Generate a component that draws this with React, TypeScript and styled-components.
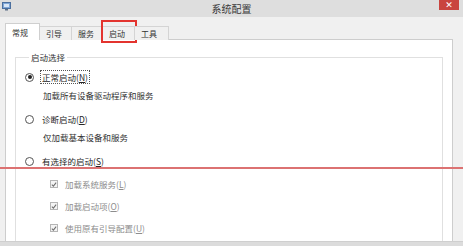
import React from "react";
import styled, { createGlobalStyle, css } from "styled-components";

const Global = createGlobalStyle`
  html, body { margin: 0; padding: 0; background: #f0f0f0; }
  body { font-family: "Noto Sans CJK SC", "Noto Sans", sans-serif; }
  * { box-sizing: border-box; }
`;

const Window = styled.div`
  position: relative;
  width: 463px;
  height: 246px;
  display: flex;
  flex-direction: column;
  overflow: hidden;
  background: #f0f0f0;
  color: #2a2a2a;
`;

const TitleBar = styled.div`
  height: 17px;
  flex: none;
  display: grid;
  grid-template-columns: 1fr auto 1fr;
  align-items: start;
  background: #dedede;
`;

const AppIcon = styled.div`
  padding: 2px 0 0 2px;
  display: flex;
  svg { display: block; }
`;

const Title = styled.div`
  font-size: 10px;
  line-height: 17px;
  color: #3a3a3a;
`;

const CloseArea = styled.div`
  display: flex;
  justify-content: flex-end;
  padding-right: 4px;
`;

const CloseButton = styled.div`
  width: 20px;
  height: 10px;
  background: #c9443f;
  color: #fff;
  font-size: 9px;
  line-height: 10px;
  text-align: center;
  font-family: "DejaVu Sans", sans-serif;
`;

const Body = styled.div`
  flex: 1;
  display: flex;
  flex-direction: column;
  padding: 6px 10px 0 5px;
  min-height: 0;
`;

const TabStrip = styled.div`
  display: flex;
  align-items: flex-end;
  height: 17px;
  flex: none;
  position: relative;
  z-index: 1;
  margin-bottom: -1px;
`;

const Tab = styled.div<{ $active?: boolean; $highlight?: boolean; $w: number }>`
  position: relative;
  width: ${(p) => p.$w}px;
  height: 14px;
  border: 1px solid #d4d4d4;
  border-bottom: none;
  margin-left: -1px;
  background: #f0f0f0;
  font-size: 8px;
  line-height: 13px;
  padding-left: 6px;
  color: #333;
  ${(p) =>
    p.$active &&
    css`
      height: 17px;
      margin-left: 0;
      background: #fff;
      border-color: #cfcfcf;
      line-height: 18px;
      z-index: 2;
    `}
  ${(p) =>
    p.$highlight &&
    css`
      &::after {
        content: "";
        position: absolute;
        left: -2px;
        right: -3px;
        top: -7px;
        bottom: -3px;
        border: 2px solid #e3342f;
      }
    `}
`;

const Panel = styled.div`
  flex: 1;
  min-height: 0;
  overflow: hidden;
  background: #fff;
  border: 1px solid #cdcdcd;
  border-bottom: none;
  padding: 11px 9px 0 9px;
`;

const GroupBox = styled.fieldset`
  margin: 0;
  height: 220px;
  border: 1px solid #e0e0e0;
  padding: 7px 0 0 9px;
  display: flex;
  flex-direction: column;
`;

const Legend = styled.legend`
  font-size: 8.5px;
  line-height: 12px;
  padding: 0 2px;
  margin-left: 4px;
  color: #333;
`;

const OptionRow = styled.div<{ $gap?: number; $space?: number }>`
  display: flex;
  align-items: center;
  height: 14px;
  gap: ${(p) => p.$space ?? 6}px;
  margin-top: ${(p) => p.$gap ?? 0}px;
`;

const RadioCircle = styled.span<{ $checked?: boolean }>`
  width: 9px;
  height: 9px;
  border-radius: 50%;
  border: 1px solid #555;
  background: #fff;
  display: flex;
  align-items: center;
  justify-content: center;
  flex: none;
  &::after {
    content: "";
    width: 4px;
    height: 4px;
    border-radius: 50%;
    background: ${(p) => (p.$checked ? "#222" : "transparent")};
  }
`;

const Label = styled.span<{ $focus?: boolean; $disabled?: boolean }>`
  font-size: 8.5px;
  line-height: 12px;
  color: ${(p) => (p.$disabled ? "#8d8d8d" : "#262626")};
  white-space: nowrap;
  padding: 0 1px;
  border: 1px dotted ${(p) => (p.$focus ? "#555" : "transparent")};
  u { text-decoration: underline; }
`;

const Description = styled.div<{ $gap: number }>`
  font-size: 8.5px;
  line-height: 12px;
  color: #333;
  margin-top: ${(p) => p.$gap}px;
  padding-left: 18px;
  white-space: nowrap;
`;

const CheckList = styled.div`
  display: flex;
  flex-direction: column;
  padding-left: 25px;
`;

const CheckBox = styled.span`
  width: 8px;
  height: 8px;
  border: 1px solid #b5b5b5;
  background: #f4f4f4;
  flex: none;
  display: flex;
  align-items: center;
  justify-content: center;
  svg { display: block; }
`;

const Footer = styled.div`
  height: 5px;
  flex: none;
  background: #dcdcdc;
  border-top: 1px solid #cfcfcf;
`;

const RedLine = styled.div`
  position: absolute;
  left: 0;
  right: 0;
  top: 167px;
  height: 2px;
  background: #dc7272;
  pointer-events: none;
`;

const Check = () => (
  <svg width="7" height="7" viewBox="0 0 7 7">
    <path d="M1 3.6 L2.8 5.4 L6 1.3" fill="none" stroke="#6d6d6d" strokeWidth="1.2" />
  </svg>
);

const tabs = [
  { label: "常规", w: 35, active: true },
  { label: "引导", w: 33 },
  { label: "服务", w: 32 },
  { label: "启动", w: 33, highlight: true },
  { label: "工具", w: 35 },
];

const checks = [
  { label: "加载系统服务", key: "L", gap: 9 },
  { label: "加载启动项", key: "O", gap: 8 },
  { label: "使用原有引导配置", key: "U", gap: 8 },
];

export default function App() {
  return (
    <>
      <Global />
      <Window>
        <TitleBar>
          <AppIcon>
            <svg width="9" height="9" viewBox="0 0 9 9">
              <rect x="0.5" y="0.5" width="8" height="6" fill="#7fa6d6" stroke="#4b6f9e" />
              <rect x="2" y="2" width="5" height="3" fill="#d8e6f6" />
              <rect x="3" y="7" width="3" height="1.5" fill="#5d6f86" />
            </svg>
          </AppIcon>
          <Title>系统配置</Title>
          <CloseArea>
            <CloseButton>✕</CloseButton>
          </CloseArea>
        </TitleBar>
        <Body>
          <TabStrip>
            {tabs.map((t) => (
              <Tab key={t.label} $w={t.w} $active={t.active} $highlight={t.highlight}>
                {t.label}
              </Tab>
            ))}
          </TabStrip>
          <Panel>
            <GroupBox>
              <Legend>启动选择</Legend>
              <OptionRow>
                <RadioCircle $checked />
                <Label $focus>
                  正常启动(<u>N</u>)
                </Label>
              </OptionRow>
              <Description $gap={5}>加载所有设备驱动程序和服务</Description>
              <OptionRow $gap={11}>
                <RadioCircle />
                <Label>
                  诊断启动(<u>D</u>)
                </Label>
              </OptionRow>
              <Description $gap={5}>仅加载基本设备和服务</Description>
              <OptionRow $gap={11}>
                <RadioCircle />
                <Label>
                  有选择的启动(<u>S</u>)
                </Label>
              </OptionRow>
              <CheckList>
                {checks.map((c) => (
                  <OptionRow key={c.key} $gap={c.gap} $space={5}>
                    <CheckBox>
                      <Check />
                    </CheckBox>
                    <Label $disabled>
                      {c.label}(<u>{c.key}</u>)
                    </Label>
                  </OptionRow>
                ))}
              </CheckList>
            </GroupBox>
          </Panel>
        </Body>
        <Footer />
        <RedLine />
      </Window>
    </>
  );
}
